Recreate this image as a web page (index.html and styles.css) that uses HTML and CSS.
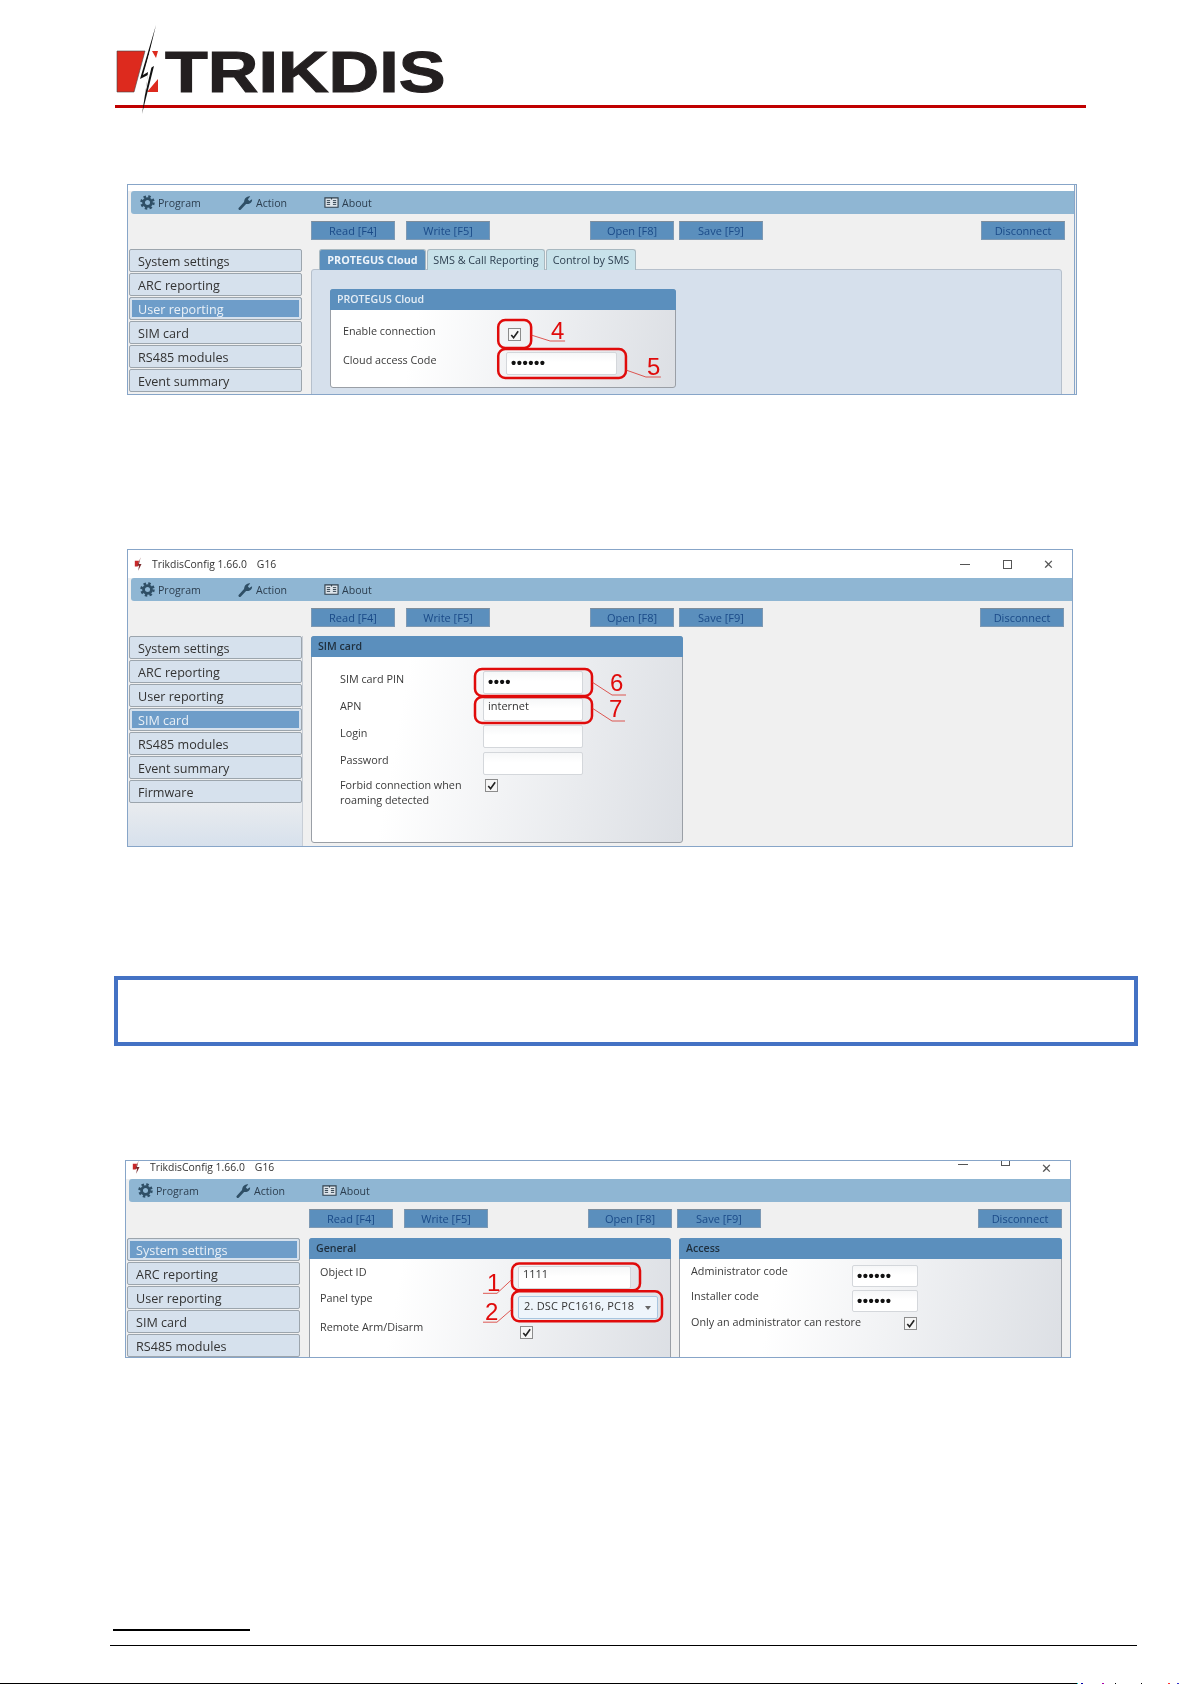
FILE: index.html
```html
<!DOCTYPE html>
<html lang="en">
<head>
<meta charset="utf-8">
<title>TRIKDIS</title>
<link rel="stylesheet" href="styles.css">
</head>
<body>
<svg class="defs" aria-hidden="true">
  <symbol id="gear" viewBox="0 0 16 16">
    <circle cx="8" cy="8" r="4.2" fill="none" stroke="#2f4f66" stroke-width="3"/>
    <circle cx="8" cy="8" r="6.4" fill="none" stroke="#2f4f66" stroke-width="2.6" stroke-dasharray="2.6 2.43"/>
  </symbol>
  <symbol id="wrench" viewBox="0 0 16 16">
    <path d="M2 14.5 8 8" fill="none" stroke="#2f4f66" stroke-width="3" stroke-linecap="round"/>
    <path d="M7 9C5.500 5.500 8.500 1 13 1.500L10.500 4.500 12 6.500 15 4.500C15.500 8.500 11 11 7 9Z" fill="#2f4f66"/>
  </symbol>
  <symbol id="book" viewBox="0 0 16 16">
    <path d="M1 3h6.500l.5 1 .5-1H15v10H1Z" fill="#dfe6ec" stroke="#2f3f4c" stroke-width="1.200"/>
    <path d="M3 6h3.500M3 8h3.500M3 10h3.500M9.500 6H13M9.500 8H13M9.500 10H13" stroke="#2f3f4c"/>
  </symbol>
  <symbol id="check" viewBox="0 0 12 12">
    <path d="M2.500 6.500 5 9.500 10 2.500" fill="none" stroke="#222" stroke-width="1.800"/>
  </symbol>
  <symbol id="appicon" viewBox="0 0 12 16">
    <path d="M1 4h5L4.500 11H1Z" fill="#c8282a"/>
    <path d="M8 0 6 8h3L5 16l1-6H4Z" fill="#7a2a2c"/>
  </symbol>
</svg>

<header class="brand">
  <div class="logo">
    <svg class="logo-mark" viewBox="0 0 50 92" aria-hidden="true">
      <path d="M2 26H30L19 67H2Z" fill="#dd2a1e" stroke="#444" stroke-width=".6"/>
      <path d="M37 26H43L41 33ZM32 67 43 54V67Z" fill="#dd2a1e"/>
      <path d="M41 0 30 46 39 41 27 89 33 50 25 54Z" fill="#111"/>
      <path d="M39 12 32 43 37 40 30 70 33 47 28 50Z" fill="#fff"/>
    </svg>
    <span class="logo-text">TRIKDIS</span>
  </div>
  <div class="brand-rule"></div>
</header>

<section class="win win-one">
  <div class="title title-empty"></div>
  <nav class="menu">
    <span class="menu-item menu-program"><svg class="icon"><use href="#gear"/></svg>Program</span>
    <span class="menu-item menu-action"><svg class="icon"><use href="#wrench"/></svg>Action</span>
    <span class="menu-item"><svg class="icon"><use href="#book"/></svg>About</span>
  </nav>
  <div class="toolbar">
    <span class="btn">Read [F4]</span>
    <span class="btn btn-write">Write [F5]</span>
    <span class="btn btn-open">Open [F8]</span>
    <span class="btn btn-save">Save [F9]</span>
    <span class="btn btn-disc">Disconnect</span>
  </div>
  <div class="body">
    <aside class="side">
      <div class="side-item">System settings</div>
      <div class="side-item">ARC reporting</div>
      <div class="side-item is-active">User reporting</div>
      <div class="side-item">SIM card</div>
      <div class="side-item">RS485 modules</div>
      <div class="side-item">Event summary</div>
    </aside>
    <main class="pane">
      <div class="tabs">
        <span class="tab tab-active tab-a">PROTEGUS Cloud</span>
        <span class="tab tab-b">SMS &amp; Call Reporting</span>
        <span class="tab tab-c">Control by SMS</span>
      </div>
      <div class="tabpanel">
        <div class="group group-cloud">
          <div class="group-head head-light">PROTEGUS Cloud</div>
          <div class="form form-cloud">
            <span class="lbl">Enable connection</span>
            <span class="cb"><svg class="cb-mark"><use href="#check"/></svg></span>
            <span class="lbl">Cloud access Code</span>
            <span class="field field-dots">••••••</span>
          </div>
        </div>
      </div>
    </main>
  </div>
  <svg class="notes" viewBox="128 185 948 209" preserveAspectRatio="none" aria-hidden="true">
    <rect class="ring" x="499" y="320" width="33" height="28" rx="7"/>
    <rect class="ring" x="499" y="349" width="128" height="29" rx="7"/>
    <path class="lead" d="M532 335 551 341H566M627 370 647 377H662"/>
    <text class="num" x="552" y="339">4</text>
    <text class="num" x="648" y="375">5</text>
  </svg>
</section>

<section class="win win-two">
  <div class="title">
    <svg class="app-icon"><use href="#appicon"/></svg>
    <span class="title-text">TrikdisConfig 1.66.0</span><span class="title-sub">G16</span>
    <span class="ctl ctl-min"></span><span class="ctl ctl-max"></span><span class="ctl-x">✕</span>
  </div>
  <nav class="menu">
    <span class="menu-item menu-program"><svg class="icon"><use href="#gear"/></svg>Program</span>
    <span class="menu-item menu-action"><svg class="icon"><use href="#wrench"/></svg>Action</span>
    <span class="menu-item"><svg class="icon"><use href="#book"/></svg>About</span>
  </nav>
  <div class="toolbar">
    <span class="btn">Read [F4]</span>
    <span class="btn btn-write">Write [F5]</span>
    <span class="btn btn-open">Open [F8]</span>
    <span class="btn btn-save">Save [F9]</span>
    <span class="btn btn-disc">Disconnect</span>
  </div>
  <div class="body">
    <aside class="side side-fill">
      <div class="side-item">System settings</div>
      <div class="side-item">ARC reporting</div>
      <div class="side-item">User reporting</div>
      <div class="side-item is-active">SIM card</div>
      <div class="side-item">RS485 modules</div>
      <div class="side-item">Event summary</div>
      <div class="side-item">Firmware</div>
    </aside>
    <main class="pane">
      <div class="group group-sim">
        <div class="group-head">SIM card</div>
        <div class="form form-sim">
          <span class="lbl">SIM card PIN</span><span class="field field-dots">••••</span>
          <span class="lbl">APN</span><span class="field">internet</span>
          <span class="lbl">Login</span><span class="field"></span>
          <span class="lbl">Password</span><span class="field"></span>
          <span class="lbl lbl-wrap">Forbid connection when roaming detected</span>
          <span class="cb cb-top"><svg class="cb-mark"><use href="#check"/></svg></span>
        </div>
      </div>
    </main>
  </div>
  <svg class="notes" viewBox="128 550 944 296" preserveAspectRatio="none" aria-hidden="true">
    <rect class="ring" x="475" y="669" width="117" height="27" rx="7"/>
    <rect class="ring" x="475" y="697" width="117" height="26" rx="7"/>
    <path class="lead" d="M592 682 612 695H626M592 708 612 721H625"/>
    <text class="num" x="610" y="691">6</text>
    <text class="num" x="609" y="717">7</text>
  </svg>
</section>

<div class="note-box"></div>

<section class="win win-three">
  <div class="title title-clip">
    <svg class="app-icon"><use href="#appicon"/></svg>
    <span class="title-text">TrikdisConfig 1.66.0</span><span class="title-sub">G16</span>
    <span class="ctl ctl-min"></span><span class="ctl ctl-max"></span><span class="ctl-x">✕</span>
  </div>
  <nav class="menu">
    <span class="menu-item menu-program"><svg class="icon"><use href="#gear"/></svg>Program</span>
    <span class="menu-item menu-action"><svg class="icon"><use href="#wrench"/></svg>Action</span>
    <span class="menu-item"><svg class="icon"><use href="#book"/></svg>About</span>
  </nav>
  <div class="toolbar">
    <span class="btn">Read [F4]</span>
    <span class="btn btn-write">Write [F5]</span>
    <span class="btn btn-open">Open [F8]</span>
    <span class="btn btn-save">Save [F9]</span>
    <span class="btn btn-disc">Disconnect</span>
  </div>
  <div class="body">
    <aside class="side">
      <div class="side-item is-active">System settings</div>
      <div class="side-item">ARC reporting</div>
      <div class="side-item">User reporting</div>
      <div class="side-item">SIM card</div>
      <div class="side-item">RS485 modules</div>
    </aside>
    <main class="pane pane-pair">
      <div class="group group-general">
        <div class="group-head">General</div>
        <div class="form form-general">
          <span class="lbl">Object ID</span><span class="field">1111</span>
          <span class="lbl lbl-up">Panel type</span>
          <span class="field field-select"><span class="select-text">2. DSC PC1616, PC18</span><span class="select-arrow"></span></span>
          <span class="lbl">Remote Arm/Disarm</span>
          <span class="cb"><svg class="cb-mark"><use href="#check"/></svg></span>
        </div>
      </div>
      <div class="group group-access">
        <div class="group-head">Access</div>
        <div class="form form-access">
          <span class="lbl">Administrator code</span><span class="field field-dots">••••••</span>
          <span class="lbl">Installer code</span><span class="field field-dots">••••••</span>
          <span class="lbl lbl-restore">Only an administrator can restore</span>
          <span class="cb cb-end"><svg class="cb-mark"><use href="#check"/></svg></span>
        </div>
      </div>
    </main>
  </div>
  <svg class="notes" viewBox="126 1160 944 197" preserveAspectRatio="none" aria-hidden="true">
    <rect class="ring" x="512" y="1263" width="128" height="27" rx="7"/>
    <rect class="ring" x="512" y="1291" width="150" height="30" rx="7"/>
    <path class="lead" d="M483 1293H497L513 1278M483 1322H497L513 1308"/>
    <text class="num" x="487" y="1291">1</text>
    <text class="num" x="485" y="1320">2</text>
  </svg>
</section>

<footer class="foot">
  <div class="foot-short"></div>
  <div class="foot-rule"></div>
  <div class="foot-end"></div>
</footer>
</body>
</html>
```

FILE: styles.css
```css
* { box-sizing: border-box; }

html, body {
  margin: 0;
  background: #fff;
}

body {
  height: 1685px;
  overflow: hidden;
  font-family: "Open Sans", "Liberation Sans", sans-serif;
  color: #333;
}

.defs { position: absolute; width: 0; height: 0; }

/* Letterhead */
.brand { height: 108px; padding-left: 115px; display: flex; flex-direction: column; justify-content: flex-end; position: relative; }
.logo { position: absolute; left: 115px; top: 25px; height: 92px; display: flex; align-items: flex-start; }
.logo-mark { width: 50px; height: 92px; flex: none; }
.logo-text {
  display: block;
  margin: 13px 0 0 0;
  font-family: "Liberation Sans", sans-serif;
  font-weight: 700;
  font-size: 57px;
  line-height: 68px;
  color: #231f20;
  -webkit-text-stroke: 1px #231f20;
  transform: scaleX(1.23);
  transform-origin: 0 0;
}
.brand-rule { width: 971px; height: 3px; background: #c00000; }

/* Program window */
.win {
  position: relative;
  overflow: hidden;
  background: #f0f0f0;
  border: 1px solid #87a5c8;
  font-size: 11.5px;
  filter: blur(.4px);
}
.win-one { width: 950px; height: 211px; margin: 76px 0 0 127px; border-right: 3px double #87a5c8; }
.win-two { width: 946px; height: 298px; margin: 154px 0 0 127px; }
.win-three { width: 946px; height: 198px; margin: 114px 0 0 125px; }

.title { height: 28px; background: #fff; display: flex; align-items: center; padding-left: 6px; font-size: 10.4px; color: #333; }
.title-empty { height: 6px; }
.title-clip { height: 18px; align-items: flex-start; }
.title-clip > * { margin-top: -1px; }
.app-icon { width: 10px; height: 14px; flex: none; margin-right: 8px; }
.title-text { line-height: 14px; }
.title-sub { margin-left: 10px; line-height: 14px; }
.ctl { display: block; flex: none; }
.ctl-min { width: 10px; height: 1px; background: #555; margin-left: auto; }
.title-clip .ctl-min { margin-top: 3px; }
.title-clip .ctl-max { margin-top: -4px; }
.ctl-max { width: 9px; height: 9px; border: 1px solid #555; margin-left: 33px; }
.ctl-x { margin: 0 18px 0 31px; font-size: 13px; line-height: 14px; color: #555; }

.menu { height: 23px; margin-left: 3px; background: #8fb6d3; border-radius: 3px 0 0 3px; display: flex; align-items: center; padding-left: 9px; font-size: 10.6px; color: #2c3e4f; }
.menu-item { display: flex; align-items: center; gap: 3px; }
.menu-program { width: 98px; }
.menu-action { width: 86px; }
.icon { width: 15px; height: 15px; flex: none; }

.toolbar { display: flex; padding: 7px 8px 9px 183px; }
.win-one .toolbar { padding-right: 9px; }
.win-three .toolbar { padding-bottom: 10px; }
.btn { width: 84px; height: 19px; background: #5b8fbd; border: 1px solid #7d99b4; border-top-color: #7e8d9b; color: #1a4a88; font-size: 11px; line-height: 17px; text-align: center; flex: none; }
.btn-write { margin-left: 11px; }
.btn-open { margin-left: 100px; }
.btn-save { margin-left: 5px; }
.btn-disc { margin-left: auto; }

.body { display: grid; grid-template-columns: 183px 1fr; }

.side { width: 175px; padding-left: 1px; display: flex; flex-direction: column; gap: 1px; height: 220px; }
.side-fill { background: linear-gradient(#f0f0f0 70%, #d6e0ec); border-right: 1px solid #c8ced6; height: 213px; }
.side-item {
  height: 23px;
  width: 173px;
  flex: none;
  padding-left: 8px;
  border: 1px solid #9ca5ad;
  border-radius: 2px;
  background: #d6e1ed;
  font-size: 12.6px;
  line-height: 23px;
  color: #333;
}
.side-item.is-active { background: #6e9dc9; box-shadow: inset 0 0 0 2px #d6e1ed; color: #e9f0f7; }

.pane-pair { display: flex; gap: 8px; }

.tabs { display: flex; gap: 1px; padding-left: 8px; height: 20px; }
.tab { height: 21px; background: #c8e2ea; border: 1px solid #a8b8c0; border-bottom: 0; border-radius: 3px 3px 0 0; font-size: 10.8px; line-height: 19px; color: #2c3e4f; text-align: center; white-space: nowrap; position: relative; }
.tab-a { width: 107px; }
.tab-b { width: 118px; }
.tab-c { width: 90px; }
.tab-active { background: #5b8fbd; color: #eef4fa; font-weight: 700; }

.tabpanel { margin-right: 12px; height: 130px; background: #d6e0ec; border: 1px solid #b6c0cc; border-radius: 3px 3px 0 0; padding: 19px 0 0 18px; }

.group { border: 1px solid #9a9fa6; border-radius: 3px; background: linear-gradient(100deg, #fff 25%, #dcdfe4 100%); }
.group-cloud { width: 346px; height: 99px; }
.group-sim { width: 372px; height: 207px; }
.group-general { width: 362px; height: 140px; }
.group-access { width: 383px; height: 140px; }
.group-head { height: 21px; margin: -1px -1px 0; padding-left: 7px; background: #5b8fbd; border-radius: 3px 3px 0 0; font-size: 10.6px; font-weight: 600; line-height: 20px; color: #1f2f3d; }
.head-light { color: #e4edf5; }

.form { display: grid; align-items: center; }
.form-cloud { grid-template-columns: 163px 111px; grid-template-rows: 15px 23px; row-gap: 10px; padding: 17px 0 0 12px; }
.form-sim { grid-template-columns: 143px 100px; grid-auto-rows: 23px; row-gap: 4px; padding: 14px 0 0 28px; }
.form-general { grid-template-columns: 198px 113px; grid-template-rows: 23px 23px 13px; row-gap: 7px; padding: 7px 0 0 10px; }
.form-access { grid-template-columns: 161px 66px; grid-template-rows: 22px 22px 14px; row-gap: 3px; padding: 6px 0 0 11px; }

.lbl { font-size: 10.8px; line-height: 14px; color: #3a3a3a; white-space: nowrap; }
.form-cloud .lbl { margin-bottom: 7px; }
.form-sim .lbl { margin-bottom: 8px; }
.form-general .lbl { margin-bottom: 11px; }
.form-access .lbl { margin-bottom: 11px; }
.form-sim .lbl-wrap { white-space: normal; line-height: 15px; width: 125px; align-self: start; margin: -2px 0 0; }
.form-general .lbl-up { align-self: start; margin: -5px 0 0; }
.form-access .lbl-restore { margin: 0 0 1px; }

.field { display: block; height: 100%; background: linear-gradient(#f6f7f8, #fff 45%); border: 1px solid #d4d7db; border-radius: 2px; padding-left: 4px; font-size: 11px; line-height: 14px; color: #333; }
.form-sim .field { height: 23px; }
.field-dots { font-family: "Liberation Sans", sans-serif; font-size: 15px; font-weight: 700; letter-spacing: .5px; line-height: 19px; color: #111; }
.field-select { width: 140px; display: flex; justify-content: space-between; align-items: center; background: #eef5fb; border-color: #a8c6e0; padding: 0 6px 4px 5px; font-size: 11px; letter-spacing: .2px; }
.select-text { white-space: nowrap; }
.select-arrow { width: 0; height: 0; margin-top: 4px; border: 3px solid transparent; border-top: 4px solid #666; border-bottom: 0; flex: none; }

.cb { display: block; width: 13px; height: 13px; margin-left: 2px; background: #f6f6f6; border: 1px solid #8c8c8c; }
.cb-top { align-self: start; }
.cb-end { margin: 3px 0 0 52px; }
.cb-mark { display: block; width: 11px; height: 11px; }

/* Annotations drawn over the window */
.notes { position: absolute; left: 0; top: 0; width: 100%; height: 100%; }
.ring { fill: none; stroke: #e00b0b; stroke-width: 2.5; }
.lead { fill: none; stroke: #d9302a; stroke-width: .8; }
.num { font-family: "Liberation Sans", sans-serif; font-size: 24px; fill: #e00b0b; }

.note-box { width: 1024px; height: 70px; margin: 129px 0 0 114px; border: 4px solid #4472c4; }

/* Page foot */
.foot { margin: 271px 0 0 0; position: relative; height: 55px; }
.foot-short { width: 137px; height: 2px; margin-left: 113px; background: #000; }
.foot-rule { width: 1027px; height: 1px; margin: 14px 0 0 110px; background: #000; }
.foot-end { width: 1077px; height: 1px; margin-top: 37px; background: #000; position: relative; }
.foot-end::after {
  content: "";
  position: absolute;
  left: 100%;
  top: 0;
  width: 115px;
  height: 1px;
  background: linear-gradient(90deg, #0cc 0 1px, #fff 1px 4px, #00a 4px 6px, #fff 6px 25px, #a0a 25px 27px, #fff 27px 38px, #000 38px 39px, #fff 39px 64px, #000 64px 65px, #fff 65px 91px, #f33 91px 93px, #fff 93px 100px, #33c 100px 102px, #fff 102px);
}
```
